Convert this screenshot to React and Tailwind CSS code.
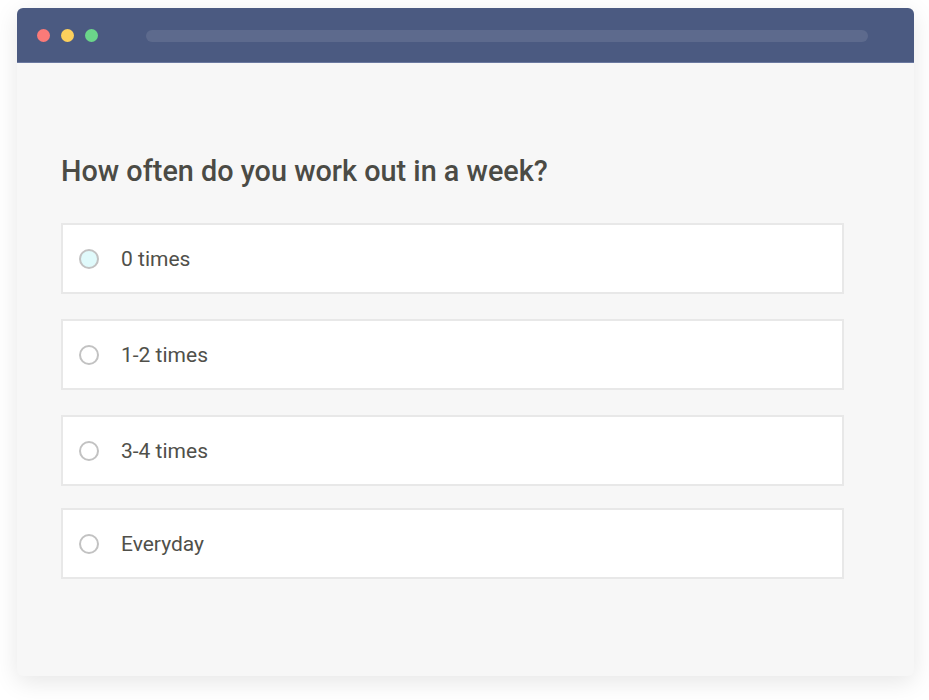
import { useState } from 'react'

const options = ['0 times', '1-2 times', '3-4 times', 'Everyday']
const gaps = ['mt-0', 'mt-[25px]', 'mt-[25px]', 'mt-[22px]']

export default function App() {
  const [picked] = useState(0)

  return (
    <div
      className="min-h-screen bg-white pt-2 pl-[17px]"
      style={{ fontFamily: 'Roboto, "Noto Sans", sans-serif' }}
    >
      <div className="w-[897px] h-[668px] flex flex-col rounded-[6px] bg-[#f7f7f7] shadow-[0_6px_24px_rgba(0,0,0,0.10)]">
        {/* Title bar */}
        <div className="h-[55px] shrink-0 flex items-center pl-[20px] pr-[46px] bg-[#4b5a81] rounded-t-[6px] border-b border-[#6b79a0]">
          <div className="flex items-center gap-[11px] mt-[1px]">
            <span className="w-[13px] h-[13px] rounded-full bg-[#fb7a78]" />
            <span className="w-[13px] h-[13px] rounded-full bg-[#fdd05c]" />
            <span className="w-[13px] h-[13px] rounded-full bg-[#6bd68a]" />
          </div>
          <div className="ml-[48px] flex-1 h-[12px] rounded-full bg-[#5d6a8d] mt-[2px]" />
        </div>

        {/* Question */}
        <div className="flex-1 pt-[91px] pl-[44px] pr-[70px]">
          <h1 className="text-[28.8px] leading-[34px] font-medium text-[#4b4b45]">
            How often do you work out in a week?
          </h1>
          <div className="mt-[35px] flex flex-col">
            {options.map((o, i) => (
              <label
                key={o}
                className={`${gaps[i]} h-[71px] flex items-center bg-white border-2 border-[#e8e8e8] pl-[16px]`}
              >
                <span
                  className={`w-[20px] h-[20px] rounded-full border-2 border-[#c2c2c2] ${
                    i === picked ? 'bg-[#e0fafb]' : 'bg-white'
                  }`}
                />
                <span className="ml-[22px] pt-[3px] text-[21px] text-[#50504a]">{o}</span>
              </label>
            ))}
          </div>
        </div>
      </div>
    </div>
  )
}
